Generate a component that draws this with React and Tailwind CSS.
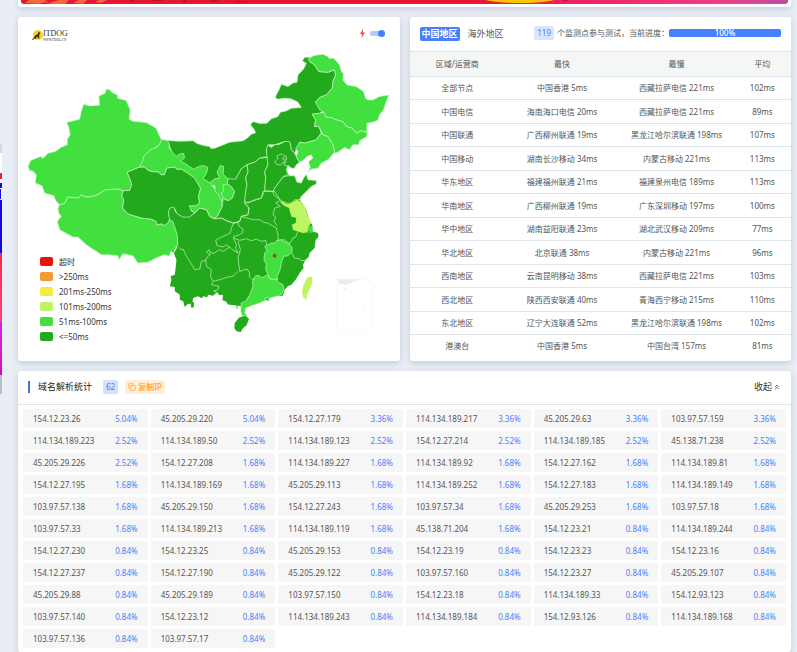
import { useState } from 'react'
import { ChevronsUp, Copy } from 'lucide-react'

const legend = [
  { label: '超时', color: 'bg-[#e8140c]' },
  { label: '>250ms', color: 'bg-[#f39a35]' },
  { label: '201ms-250ms', color: 'bg-[#f5ec42]' },
  { label: '101ms-200ms', color: 'bg-[#bef663]' },
  { label: '51ms-100ms', color: 'bg-[#42e03f]' },
  { label: '<=50ms', color: 'bg-[#22aa1c]' },
]

const regions = [
  ['全部节点', '中国香港 5ms', '西藏拉萨电信 221ms', '102ms'],
  ['中国电信', '海南海口电信 20ms', '西藏拉萨电信 221ms', '89ms'],
  ['中国联通', '广西柳州联通 19ms', '黑龙江哈尔滨联通 198ms', '107ms'],
  ['中国移动', '湖南长沙移动 34ms', '内蒙古移动 221ms', '113ms'],
  ['华东地区', '福建福州联通 21ms', '福建泉州电信 189ms', '113ms'],
  ['华南地区', '广西柳州联通 19ms', '广东深圳移动 197ms', '100ms'],
  ['华中地区', '湖南益阳联通 23ms', '湖北武汉移动 209ms', '77ms'],
  ['华北地区', '北京联通 38ms', '内蒙古移动 221ms', '96ms'],
  ['西南地区', '云南昆明移动 38ms', '西藏拉萨电信 221ms', '103ms'],
  ['西北地区', '陕西西安联通 40ms', '青海西宁移动 215ms', '110ms'],
  ['东北地区', '辽宁大连联通 52ms', '黑龙江哈尔滨联通 198ms', '102ms'],
  ['港澳台', '中国香港 5ms', '中国台湾 157ms', '81ms'],
]

const addresses = [
  ['154.12.23.26', '5.04%'], ['45.205.29.220', '5.04%'], ['154.12.27.179', '3.36%'],
  ['114.134.189.217', '3.36%'], ['45.205.29.63', '3.36%'], ['103.97.57.159', '3.36%'],
  ['114.134.189.223', '2.52%'], ['114.134.189.50', '2.52%'], ['114.134.189.123', '2.52%'],
  ['154.12.27.214', '2.52%'], ['114.134.189.185', '2.52%'], ['45.138.71.238', '2.52%'],
  ['45.205.29.226', '2.52%'], ['154.12.27.208', '1.68%'], ['114.134.189.227', '1.68%'],
  ['114.134.189.92', '1.68%'], ['154.12.27.162', '1.68%'], ['114.134.189.81', '1.68%'],
  ['154.12.27.195', '1.68%'], ['114.134.189.169', '1.68%'], ['45.205.29.113', '1.68%'],
  ['114.134.189.252', '1.68%'], ['154.12.27.183', '1.68%'], ['114.134.189.149', '1.68%'],
  ['103.97.57.138', '1.68%'], ['45.205.29.150', '1.68%'], ['154.12.27.243', '1.68%'],
  ['103.97.57.34', '1.68%'], ['45.205.29.253', '1.68%'], ['103.97.57.18', '1.68%'],
  ['103.97.57.33', '1.68%'], ['114.134.189.213', '1.68%'], ['114.134.189.119', '1.68%'],
  ['45.138.71.204', '1.68%'], ['154.12.23.21', '0.84%'], ['114.134.189.244', '0.84%'],
  ['154.12.27.230', '0.84%'], ['154.12.23.25', '0.84%'], ['45.205.29.153', '0.84%'],
  ['154.12.23.19', '0.84%'], ['154.12.23.23', '0.84%'], ['154.12.23.16', '0.84%'],
  ['154.12.27.237', '0.84%'], ['154.12.27.190', '0.84%'], ['45.205.29.122', '0.84%'],
  ['103.97.57.160', '0.84%'], ['154.12.23.27', '0.84%'], ['45.205.29.107', '0.84%'],
  ['45.205.29.88', '0.84%'], ['45.205.29.189', '0.84%'], ['103.97.57.150', '0.84%'],
  ['154.12.23.18', '0.84%'], ['114.134.189.33', '0.84%'], ['154.12.93.123', '0.84%'],
  ['103.97.57.140', '0.84%'], ['154.12.23.12', '0.84%'], ['114.134.189.243', '0.84%'],
  ['114.134.189.184', '0.84%'], ['154.12.93.126', '0.84%'], ['114.134.189.168', '0.84%'],
  ['103.97.57.136', '0.84%'], ['103.97.57.17', '0.84%'],
]

const DARK = '#22aa1c'
const LIGHT = '#42e03f'
const LIME = '#bef663'

const ChinaMap = () => (
  <svg viewBox="54 51 1146 1032" className="block w-full h-auto" role="img" aria-label="中国地图">
    <g stroke="#c9f5c4" strokeWidth="2" strokeLinejoin="round">
      {/* 南方底图 */}
      <g transform="translate(480 510)">
        <path fill={DARK} stroke="none" d="M29 150 26 130 26 115 34 109 42 112 45 124 52 132 69 142 89 142 104 130 120 100 165 95 180 60 220 0 380 0 420 90 440 120 450 155 458 165 458 185 475 190 477 200 468 212 465 235 450 250 447 262 438 270 430 285 432 295 420 310 408 330 395 345 384 350 375 360 370 378 350 380 330 385 300 400 275 408 258 415 255 430 262 440 255 445 245 430 243 410 234 408 232 422 230 408 205 405 198 395 188 392 190 375 178 376 172 368 160 378 145 375 142 383 130 380 126 386 115 380 100 385 98 396 103 400 102 412 95 415 92 402 82 405 75 412 70 395 60 390 60 375 45 365 45 352 30 350 35 330 32 320 45 315 48 290 50 270 42 250 50 238 55 220 50 190 40 165Z" />
      </g>
      <g transform="translate(480 135)">
        {/* 内蒙古 */}
        <path fill={DARK} d="M22 287 60 289 100 288 112 296 135 303 150 305 153 311 165 310 210 292 250 288 262 280 275 268 288 264 282 252 272 240 280 230 300 236 322 235 335 222 355 215 362 202 380 198 395 190 425 188 415 172 395 162 375 160 352 163 347 155 358 135 365 118 385 125 400 114 412 112 415 90 432 72 440 55 428 48 435 37 450 37 450 50 465 60 478 80 505 82 525 75 528 90 520 110 518 130 500 150 480 158 468 172 480 190 488 200 480 205 458 208 468 225 465 245 478 245 485 265 470 285 435 295 420 292 412 310 405 325 395 315 390 292 375 290 345 300 325 300 320 320 325 335 300 340 285 352 262 360 245 372 235 390 228 403 150 425 60 380Z" />
        {/* 甘肃 */}
        <path fill={LIGHT} d="M4 283-2 300-12 308-28 313-48 335-61 367-46 367-36 376-26 380-4 382 4 390 14 390 21 370 44 367 52 374 64 373 84 385 104 400 122 430 116 455 119 475 109 483 89 483 90 492 104 505 110 500 120 490 140 495 150 515 165 522 175 510 185 490 188 468 182 452 165 432 148 412 130 402 140 385 145 368 130 362 110 368 103 374 90 366 75 355 62 350 74 340 72 326 58 328 50 335 40 325 28 308 28 296 22 286 12 285Z" />
        {/* 宁夏 */}
        <path fill={LIGHT} d="M152 412 165 402 180 400 172 382 182 362 192 365 190 388 205 402 203 418 215 425 225 440 218 460 205 468 190 458 186 470 176 448 166 440 166 425Z" />
        <path fill="none" d="M203 418 190 420 192 440 184 444 190 458" />
        {/* 陕西 */}
        <path fill={DARK} d="M245 372 235 390 228 403 205 402 203 418 215 425 225 440 218 460 205 468 190 462 188 485 175 512 165 522 185 520 205 530 222 535 240 530 245 515 265 510 268 490 255 475 258 440 262 420 258 400 265 380 262 360Z" />
        {/* 山西 */}
        <path fill={DARK} d="M262 360 285 352 300 340 325 338 325 360 315 380 318 400 315 437 305 460 285 465 265 475 255 470 258 440 262 420 258 400 265 380Z" />
        {/* 河北 */}
        <path fill={DARK} d="M325 300 335 308 345 300 360 298 375 290 390 290 395 315 405 325 415 345 420 352 410 360 405 370 395 370 385 362 380 375 385 390 370 395 360 410 345 430 340 440 315 437 318 400 315 380 325 360 322 335 320 315Z" />
        <path fill="none" d="M345 350 355 342 352 333 365 327 380 335 381 345 374 345 378 352 368 354 362 361 350 358ZM374 345 368 340 376 336M378 352 372 360 384 364" />
        {/* 黑龙江 */}
        <path fill={LIGHT} d="M450 50 446 42 462 32 490 28 505 35 508 40 522 40 530 48 540 60 545 78 552 88 550 105 562 120 590 125 612 140 618 160 625 165 640 165 660 155 688 150 680 170 672 195 660 210 655 226 640 232 622 235 622 262 605 258 590 265 578 250 560 245 550 230 530 225 515 218 500 218 492 202 480 195 468 172 480 158 500 150 518 130 520 110 528 90 525 75 505 82 478 80 465 60Z" />
        {/* 吉林 */}
        <path fill={LIGHT} d="M458 208 480 205 492 202 500 218 515 218 530 225 550 230 560 245 578 250 590 265 605 258 622 262 622 275 610 282 600 288 598 300 580 300 570 315 555 308 535 322 525 325 520 300 505 275 490 270 478 245 465 245 468 225Z" />
        {/* 辽宁 */}
        <path fill={LIGHT} d="M490 270 505 275 520 300 525 322 505 345 485 355 475 370 455 373 445 382 452 368 447 350 460 340 455 330 442 335 430 347 420 352 410 335 415 320 408 312 420 292 435 295 470 285 485 265Z" />
        {/* 山东 */}
        <path fill={DARK} d="M345 430 360 410 370 397 385 393 405 393 412 412 425 415 432 400 440 388 445 405 470 407 470 418 455 425 440 440 425 455 420 465 405 465 395 475 380 475 365 468 355 460 342 450 340 440Z" />
      </g>

      <g transform="translate(54 240)">
        {/* 新疆 */}
        <path fill={LIGHT} d="M273 28 283 38 298 45 300 55 325 62 337 90 334 118 345 124 385 128 415 145 422 162 430 178 428 190 414 203 398 210 378 230 374 245 365 262 328 277 337 300 342 315 335 332 315 333 300 328 262 330 240 345 215 352 200 351 190 345 182 355 150 352 140 372 125 375 113 362 108 348 80 340 72 318 52 310 55 285 45 274 35 272 30 260 38 242 68 230 75 236 90 220 112 215 130 202 148 195 148 178 157 165 152 140 146 128 185 118 190 95 197 73 215 78 245 76 243 48 262 40 265 28Z" />
        {/* 西藏 */}
        <path fill={LIGHT} d="M125 375 140 372 150 352 182 355 190 345 200 351 215 352 240 345 262 330 300 328 315 333 312 350 318 360 314 385 330 402 370 415 400 418 415 425 418 436 430 432 440 437 452 428 455 420 465 425 472 445 478 465 480 495 473 505 468 520 458 515 455 530 440 525 415 535 390 548 360 550 345 528 315 522 303 540 300 528 270 525 250 525 235 515 205 495 180 472 165 472 125 450 118 425 130 410 122 400 120 385Z" />
        {/* 青海 */}
        <path fill={DARK} d="M365 262 380 262 390 271 400 275 422 277 430 285 440 285 447 265 470 262 478 269 490 268 510 280 530 295 548 325 542 350 545 370 535 378 515 378 520 392 530 400 515 412 495 412 478 402 468 382 455 385 452 400 455 420 452 428 440 437 430 432 418 436 415 425 400 418 370 415 330 402 314 385 318 360 312 350 315 333 335 332 342 315 337 300 328 277Z" />
      </g>

      <g transform="translate(480 510)">
        {/* 省界 */}
        <g fill="none">
          <path d="M94 122 104 130 120 115 140 120 150 140 165 147 185 145 205 155 222 160 215 175 212 190 190 200 180 205 168 212 172 228 190 232 198 226 210 232" />
          <path d="M55 232 64 240 70 238 80 260 90 275 105 300 120 298 125 275 138 272 142 262 152 255 140 248 148 240 152 250 165 250 178 240 190 245 210 232 218 240 235 250" />
          <path d="M222 160 235 158 238 170 250 178 248 190 240 195 222 200 222 208 230 225 228 236 235 250" />
          <path d="M222 160 240 155 245 140 265 135 268 115 255 100 285 92 305 85 310 65 345 65M345 65 362 92 348 100 362 110 345 115 340 135 348 142 343 155 352 168M245 140 280 150 300 150 312 158 325 160 338 168 350 175 355 195 355 212" />
          <path d="M222 205 240 212 260 207 275 213 290 208 305 215 318 212 322 228M235 215 242 240 235 265 238 290 240 305" />
          <path d="M355 212 375 210 390 222 400 205 408 202 415 185M396 248 404 265 420 268 424 273 438 272" />
          <path d="M240 305 262 298 270 310 268 320 278 330 288 325 300 318M138 272 140 290 155 300 152 320 160 335 180 330 205 322 220 320 235 305M160 335 155 345 178 350 175 360 162 364 172 370" />
        </g>
        {/* 江西 */}
        <path fill={LIGHT} d="M350 213 365 210 375 216 388 222 398 235 396 248 385 258 372 260 365 280 360 305 352 320 354 330 330 328 325 315 318 300 320 285 313 270 315 250 322 242 315 230 335 220 345 220Z" />
        {/* 广东 */}
        <path fill={LIGHT} d="M300 318 305 325 325 315 330 328 350 330 355 338 370 345 373 360 365 375 350 380 330 385 328 395 318 390 300 400 275 408 258 415 255 430 262 438 248 440 243 425 245 400 258 395 270 375 280 350 278 335 288 318Z" />
        {/* 江苏 */}
        <path fill={LIME} stroke="none" d="M360 95 370 95 378 102 390 103 400 97 412 90 430 100 438 115 445 140 455 158 448 170 443 188 430 190 415 185 400 180 397 165 408 160 410 145 395 140 388 115 372 107Z" />
        <path fill={LIGHT} stroke="none" d="M445 178 452 168 459 170 459 188 448 190Z" />
        <path fill={DARK} d="M316 386 324 384 328 391 320 394Z" />
        {/* 海南 */}
        <path fill={DARK} stroke="none" d="M225 460 238 444 252 440 262 442 268 448 260 468 250 475 243 487 230 485 224 476Z" />
        {/* 台湾 */}
        <path fill={LIME} stroke="none" d="M452 320 458 324 456 345 448 362 441 378 441 392 430 382 427 365 432 345 442 326Z" />
        {/* 监测点 */}
        <path fill="#c9300c" stroke="none" d="M345 250 348 255 352 256 349 260 347 266 343 262 338 260 341 255Z" />
        {/* 南海诸岛 */}
        <path fill="#ececec" stroke="none" d="M532 328H600L560 345 538 342ZM552 360 560 352 558 362ZM622 330 629 332 626 338ZM614 378 619 373 617 384ZM612 410 617 405 616 414Z" />
        <path fill="none" stroke="#f7f7f7" d="M532 328H637V485H532Z" />
      </g>
    </g>
  </svg>
)

const Logo = () => (
  <div className="flex items-center">
    <svg viewBox="0 0 22 22" className="w-[11px] h-[11px]" aria-hidden="true">
      <circle cx="12" cy="10" r="10" fill="#f8cf1c" />
      <path fill="#2b2413" d="M13 5 14 3 15 5 17 6 15 8 14 12 15 17 13 17 11 13 9 14 8 18 5 18 6 14 2 20 0 20 5 13 8 10 12 8Z" />
    </svg>
    <div className="font-['Liberation_Serif',serif] text-[#333]">
      <div className="text-[8px] leading-[9px]">ITDOG</div>
      <div className="text-[3px] leading-[4px]">WWW.ITDOG.CN</div>
    </div>
  </div>
)

const MapCard = () => {
  const [fast, setFast] = useState(true)

  return (
    <section className="relative rounded-[3px] bg-white shadow-[0_2px_6px_rgba(60,80,110,0.22)]">
      <ChinaMap />
      <div className="absolute inset-x-0 top-3 flex items-start justify-between pl-[14px] pr-[15px]">
        <Logo />
        <label className="flex items-center gap-[5px]">
          <svg viewBox="0 0 10 18" className="w-[5px] h-[9px]" aria-hidden="true">
            <path fill="#f0504f" d="M6 0 0 10H4L3 18 10 7H6Z" />
          </svg>
          <input
            type="checkbox"
            aria-label="快速模式"
            checked={fast}
            onChange={(e) => setFast(e.target.checked)}
            className="relative h-[9px] w-[15px] appearance-none before:absolute before:inset-x-0 before:top-[2px] before:h-[5px] before:rounded-full before:bg-[#b3caff] after:absolute after:left-0 after:top-px after:h-[7px] after:w-[7px] after:rounded-full after:bg-[#4680ff] checked:after:left-2"
          />
        </label>
      </div>
      <ul className="absolute bottom-[17px] left-[22px] text-[8px] leading-[15px] text-[#333]">
        {legend.map((item) => (
          <li key={item.label} className="flex items-center gap-[6px]">
            <span className={`h-[9px] w-[13px] rounded-[2px] ${item.color}`}></span>
            {item.label}
          </li>
        ))}
      </ul>
    </section>
  )
}

const RegionCard = () => (
  <section className="flex flex-col rounded-[3px] bg-white pb-[3px] shadow-[0_2px_6px_rgba(60,80,110,0.22)]">
    <div className="flex h-[34px] items-center px-[10px]">
      <button className="rounded-[2px] bg-[#4680ff] px-[2px] text-[9px] font-bold leading-[14px] text-white">中国地区</button>
      <button className="ml-2 text-[9px] leading-[14px] text-[#555]">海外地区</button>
      <div className="ml-auto flex items-center text-[8px] leading-[14px] text-[#555] pb-[2px]">
        <span className="mr-[3px] rounded-[2px] bg-[#d9e5ff] px-[3px] text-[#4680ff]">119</span>
        <span className="whitespace-nowrap">个监测点参与测试，当前进度：</span>
      </div>
      <div className="mb-[2px] flex h-2 w-28 rounded-[2px] bg-[#e9ecef]" role="progressbar" aria-valuenow={100} aria-label="当前进度">
        <div className="flex w-full items-center justify-center rounded-[2px] bg-[#4680ff] text-[8px] font-medium leading-[12px] text-white">100%</div>
      </div>
    </div>
    <div className="flex-1">
      <table className="h-full w-full table-fixed border-collapse text-center text-[8px] leading-[12px] text-[#555]">
        <thead>
          <tr className="h-[25px] border-y border-[#dfe4ea] bg-[#f5f6f6]">
            <th className="w-[25%] font-normal">区域/运营商</th>
            <th className="w-[30%] font-normal">最快</th>
            <th className="w-[30%] font-normal">最慢</th>
            <th className="w-[15%] font-normal">平均</th>
          </tr>
        </thead>
        <tbody>
          {regions.map((row) => (
            <tr key={row[0]} className="border-b border-[#dfe4ea] last:border-b-0">
              {row.map((cell, index) => (
                <td key={index} className="whitespace-nowrap">{cell}</td>
              ))}
            </tr>
          ))}
        </tbody>
      </table>
    </div>
  </section>
)

const AddressCard = () => {
  const [open, setOpen] = useState(true)

  return (
    <section className="mt-[10px] rounded-[3px] bg-white pb-1 shadow-[0_2px_6px_rgba(60,80,110,0.22)]">
      <div className="flex h-[34px] items-center border-b border-[#dfe4ea] px-[10px]">
        <span className="mr-2 h-3 w-[2px] bg-[#4073dd]"></span>
        <h2 className="text-[9px] leading-[14px] text-[#222]">域名解析统计</h2>
        <span className="ml-[11px] rounded-[2px] bg-[#d3e1ff] px-[3px] text-[8px] leading-[14px] text-[#4680ff]">62</span>
        <button className="ml-[7px] flex items-center gap-[2px] rounded-[2px] bg-[#ffefd6] px-[3px] text-[8px] font-medium leading-[14px] text-[#ff9d1c]">
          <Copy className="h-2 w-2" />
          复制IP
        </button>
        <button onClick={() => setOpen(!open)} className="ml-auto flex items-center gap-px text-[9px] leading-[14px] text-[#333]">
          收起
          <ChevronsUp className="h-2 w-2" />
        </button>
      </div>
      {open && (
        <ul className="grid grid-cols-6 gap-[3px] px-[5px] pt-1 text-[8px] leading-[19px]">
          {addresses.map(([ip, share]) => (
            <li key={ip} className="flex justify-between rounded-[2px] bg-[#f6f6f6] px-[10px]">
              <span className="text-[#555]">{ip}</span>
              <span className="text-[#4680ff]">{share}</span>
            </li>
          ))}
        </ul>
      )}
    </section>
  )
}

const Banner = () => (
  <div className="rounded-b-[3px] bg-white px-[3px] pb-[3px] shadow-[0_2px_6px_rgba(60,80,110,0.22)]">
    <svg viewBox="0 0 767 4" preserveAspectRatio="none" className="block h-1 w-full rounded-b-[3px]" aria-hidden="true">
      <defs>
        <linearGradient id="banner">
          <stop offset="0.58" stopColor="#e61732" />
          <stop offset="0.75" stopColor="#f0266a" />
          <stop offset="0.92" stopColor="#ee3f88" />
          <stop offset="1" stopColor="#b950a4" />
        </linearGradient>
      </defs>
      <path fill="url(#banner)" d="M0 0H767V4H0Z" />
      <path fill="#f2683c" d="M4 3 8 0H24L28 3 38 0H48L44 4H30L24 2 18 4ZM52 3 58 0H66L62 4ZM74 2 78 0H86L80 3Z" />
      <path fill="#b9122a" d="M108 0H114L110 2ZM130 0H142V1H130ZM160 1 166 0 164 3ZM188 0H200L192 2ZM214 1H226V2H214Z" />
      <ellipse cx="499" cy="-5" rx="44" ry="8" fill="#fbc60a" />
      <path fill="#a5143f" d="M541 0 548 0 544 1Z" />
    </svg>
  </div>
)

// 左侧广告位，只露出右边缘
const SideAd = () => (
  <aside className="absolute left-0 top-36 w-[2px]" aria-hidden="true">
    <div className="h-[9px] bg-[#d8d8d4]"></div>
    <div className="h-5 bg-white"></div>
    <div className="h-[6px] bg-[#e52338]"></div>
    <div className="h-1 bg-white"></div>
    <div className="h-[70px] bg-[#1408d8] pt-[5px]">
      <div className="h-3 border-y border-r border-white"></div>
    </div>
    <div className="h-[69px] bg-linear-to-b from-[#f52a4a] to-[#ff4379]"></div>
    <div className="h-[53px] bg-linear-to-b from-[#c02be8] to-[#d800b8]"></div>
    <div className="h-[19px] bg-[#bdbdbd]"></div>
  </aside>
)

const App = () => {
  return (
    <div className="relative min-h-screen bg-[#e9edf5] pl-[18px] pr-[6px] font-['Noto_Sans','Noto_Sans_CJK_SC',sans-serif]">
      <SideAd />
      <Banner />
      <main className="pt-[10px]">
        <div className="grid grid-cols-2 gap-[10px]">
          <MapCard />
          <RegionCard />
        </div>
        <AddressCard />
      </main>
    </div>
  )
}

export default App
